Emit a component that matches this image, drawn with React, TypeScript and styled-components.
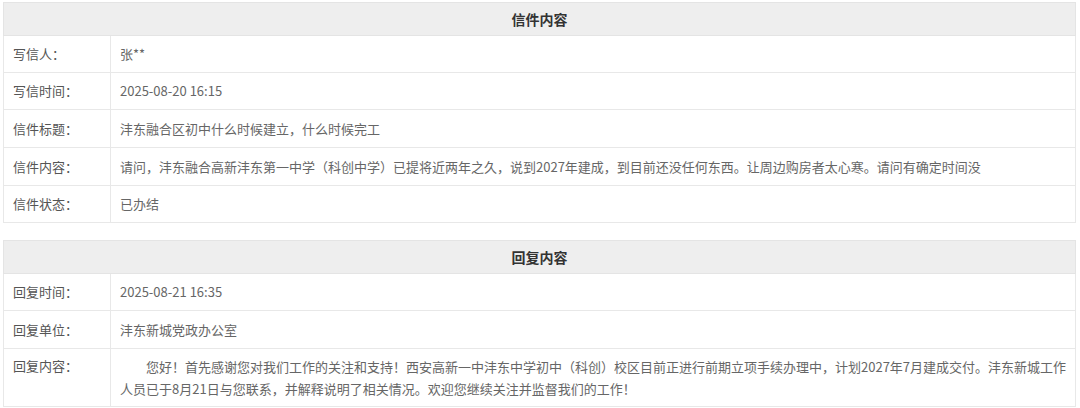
import styled, { createGlobalStyle } from "styled-components";

const GlobalStyle = createGlobalStyle`
  html, body {
    margin: 0;
    padding: 0;
    background: #ffffff;
    font-family: "Microsoft YaHei", "Noto Sans CJK SC", "Noto Sans", sans-serif;
  }
`;

const Page = styled.div`
  width: 1080px;
  padding: 2px 4px 0 3px;
  box-sizing: border-box;
  display: flex;
  flex-direction: column;
  gap: 17px;
`;

const Table = styled.table`
  width: 1073px;
  border-collapse: collapse;
  table-layout: fixed;
  font-size: 13px;
  color: #666;
`;

const LabelCol = styled.col`
  width: 107px;
`;

const HeadCell = styled.th`
  height: 32px;
  padding: 0;
  background: #eeeeee;
  border: 1px solid #e4e4e4;
  color: #333;
  font-size: 14px;
  font-weight: bold;
  text-align: center;
`;

const Label = styled.td<{ $multi?: boolean }>`
  padding: ${(p) => (p.$multi ? "6px 0 6px 9px" : "0 0 0 9px")};
  border: 1px solid #e8e8e8;
  color: #555;
  line-height: ${(p) => (p.$multi ? "22px" : "20px")};
  vertical-align: ${(p) => (p.$multi ? "top" : "middle")};
`;

const Value = styled.td<{ $multi?: boolean }>`
  padding: ${(p) => (p.$multi ? "6px 4px 6px 9px" : "0 4px 0 9px")};
  border: 1px solid #e8e8e8;
  line-height: ${(p) => (p.$multi ? "22px" : "20px")};
  text-indent: ${(p) => (p.$multi ? "2em" : "0")};
  vertical-align: middle;
`;

const Row = styled.tr<{ $h?: number }>`
  height: ${(p) => p.$h ?? 37}px;
`;

type Item = { label: string; value: string; multi?: boolean; h?: number };

const letter: Item[] = [
  { label: "写信人：", value: "张**" },
  { label: "写信时间：", value: "2025-08-20 16:15" },
  { label: "信件标题：", value: "沣东融合区初中什么时候建立，什么时候完工", h: 38 },
  {
    label: "信件内容：",
    value:
      "请问，沣东融合高新沣东第一中学（科创中学）已提将近两年之久，说到2027年建成，到目前还没任何东西。让周边购房者太心寒。请问有确定时间没",
    h: 38,
  },
  { label: "信件状态：", value: "已办结" },
];

const reply: Item[] = [
  { label: "回复时间：", value: "2025-08-21 16:35" },
  { label: "回复单位：", value: "沣东新城党政办公室", h: 38 },
  {
    label: "回复内容：",
    value:
      "您好！首先感谢您对我们工作的关注和支持！西安高新一中沣东中学初中（科创）校区目前正进行前期立项手续办理中，计划2027年7月建成交付。沣东新城工作人员已于8月21日与您联系，并解释说明了相关情况。欢迎您继续关注并监督我们的工作！",
    multi: true,
    h: 58,
  },
];

function InfoTable({ title, items }: { title: string; items: Item[] }) {
  return (
    <Table>
      <colgroup>
        <LabelCol />
        <col />
      </colgroup>
      <thead>
        <tr>
          <HeadCell colSpan={2}>{title}</HeadCell>
        </tr>
      </thead>
      <tbody>
        {items.map((it) => (
          <Row key={it.label} $h={it.h}>
            <Label $multi={it.multi}>{it.label}</Label>
            <Value $multi={it.multi}>{it.value}</Value>
          </Row>
        ))}
      </tbody>
    </Table>
  );
}

export default function App() {
  return (
    <>
      <GlobalStyle />
      <Page>
        <InfoTable title="信件内容" items={letter} />
        <InfoTable title="回复内容" items={reply} />
      </Page>
    </>
  );
}
